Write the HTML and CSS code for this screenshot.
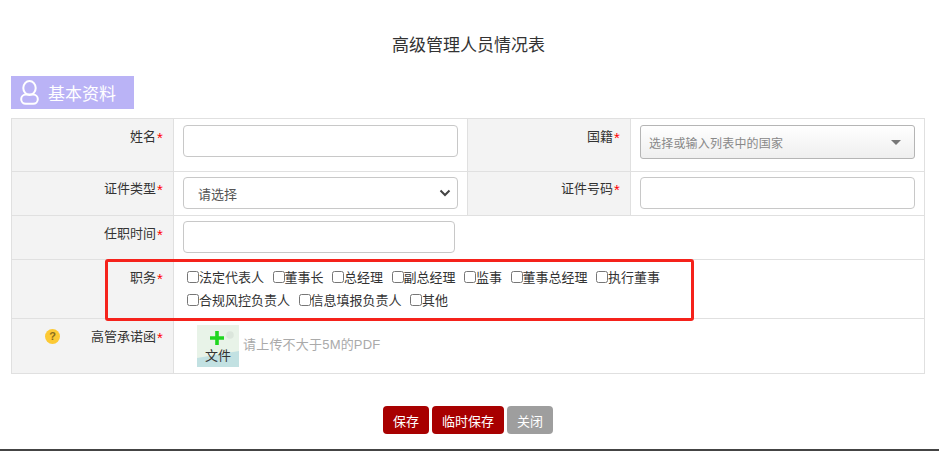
FILE: index.html
```html
<!DOCTYPE html>
<html>
<head>
    <title>高级管理人员情况表</title>
    <link rel="stylesheet" href="styles.css">
</head>
<body>
    <h1 class="page-title">高级管理人员情况表</h1>
    <div class="section-head">
        <svg class="section-icon" width="19" height="25" viewBox="0 0 19 25" fill="none" stroke="#fff" stroke-width="2">
            <ellipse cx="9.5" cy="8" rx="6.2" ry="7"/>
            <rect x="1.2" y="14.5" width="16.6" height="9.3" rx="4.6"/>
        </svg>
        <span>基本资料</span>
    </div>
    <div class="form-wrap">
        <table class="info-table">
            <colgroup>
                <col class="col-label">
                <col class="col-value">
                <col class="col-label2">
                <col>
            </colgroup>
            <tr class="row-1">
                <th>姓名<em>*</em></th>
                <td><input type="text" class="field"></td>
                <th>国籍<em>*</em></th>
                <td>
                    <div class="combo">
                        <span>选择或输入列表中的国家</span>
                        <i class="combo-caret"></i>
                    </div>
                </td>
            </tr>
            <tr class="row-2">
                <th>证件类型<em>*</em></th>
                <td>
                    <div class="field select-field">
                        <span>请选择</span>
                        <svg width="12" height="8" viewBox="0 0 12 8" fill="none" stroke="#444" stroke-width="2">
                            <path d="M1.5 1.5 6 6l4.5-4.5"/>
                        </svg>
                    </div>
                </td>
                <th>证件号码<em>*</em></th>
                <td><input type="text" class="field"></td>
            </tr>
            <tr class="row-3">
                <th>任职时间<em>*</em></th>
                <td colspan="3"><input type="text" class="field field-short"></td>
            </tr>
            <tr class="row-4">
                <th>职务<em>*</em></th>
                <td colspan="3">
                    <div class="check-list">
                        <label><input type="checkbox">法定代表人</label>
                        <label><input type="checkbox">董事长</label>
                        <label><input type="checkbox">总经理</label>
                        <label><input type="checkbox">副总经理</label>
                        <label><input type="checkbox">监事</label>
                        <label><input type="checkbox">董事总经理</label>
                        <label><input type="checkbox">执行董事</label>
                        <label><input type="checkbox">合规风控负责人</label>
                        <label><input type="checkbox">信息填报负责人</label>
                        <label><input type="checkbox">其他</label>
                    </div>
                </td>
            </tr>
            <tr class="row-5">
                <th class="help-cell"><i class="help-icon">?</i>高管承诺函<em>*</em></th>
                <td colspan="3">
                    <div class="upload">
                        <div class="upload-btn">
                            <svg class="upload-bg" width="42" height="42" viewBox="0 0 42 42">
                                <rect width="42" height="42" fill="#e8f3e8"/>
                                <path d="M0 33 42 26V42H0Z" fill="#c2e1e2"/>
                                <circle cx="33" cy="10" r="3.8" fill="#dbe6dc"/>
                                <path d="M18.200 6h3.600v5.200H27v3.600h-5.200V20h-3.600v-5.200H13v-3.600h5.200Z" fill="#1fd61f"/>
                            </svg>
                            <span>文件</span>
                        </div>
                        <span class="upload-tip">请上传不大于5M的PDF</span>
                    </div>
                </td>
            </tr>
        </table>
        <div class="highlight-box"></div>
    </div>
    <div class="actions">
        <button class="btn btn-red">保存</button>
        <button class="btn btn-red">临时保存</button>
        <button class="btn btn-grey">关闭</button>
    </div>
    <div class="bottom-line"></div>
</body>
</html>
```

FILE: styles.css
```css
html, body {
    height: 451px;
    overflow: hidden;
}
body {
    margin: 0;
    background-color: #fff;
    color: #333;
    font-family: "Liberation Sans", "Noto Sans CJK SC", sans-serif;
    font-size: 13px;
    display: flex;
    flex-direction: column;
}
.page-title {
    margin: 35px 0 0;
    height: 41px;
    line-height: 21px;
    font-size: 17px;
    font-weight: normal;
    text-align: center;
    padding-right: 2px;
}
.section-head {
    margin-left: 11px;
    width: 123px;
    height: 33px;
    background-color: #bab3f6;
    color: #fff;
    font-size: 17px;
    display: flex;
    align-items: center;
    box-sizing: border-box;
    padding-left: 9px;
    gap: 9px;
}
.form-wrap {
    position: relative;
    margin: 9px 14px 0 11px;
}
.info-table {
    width: 100%;
    border-collapse: collapse;
    table-layout: fixed;
}
.info-table th,
.info-table td {
    border: 1px solid #e0e0e0;
    padding: 0;
}
.info-table th {
    background-color: #f3f3f3;
    font-weight: normal;
    text-align: right;
    vertical-align: top;
    padding: 9px 9px 0 0;
    line-height: 18px;
}
.info-table td {
    vertical-align: top;
    padding: 6px 9px 0;
}
.info-table em {
    display: inline-block;
    width: 8px;
    color: #f00;
    font-size: 15px;
    line-height: 14px;
    font-style: normal;
    text-align: center;
    vertical-align: -2px;
}
.col-label {
    width: 162px;
}
.col-value {
    width: 294px;
}
.col-label2 {
    width: 163px;
}
.row-1 { height: 53px; }
.row-2 { height: 44px; }
.row-3 { height: 44px; }
.row-4 { height: 59px; }
.row-5 { height: 55px; }
.info-table .row-2 th {
    padding-top: 8px;
}
.info-table .row-2 td,
.info-table .row-3 td {
    padding-top: 5px;
}
.field {
    display: block;
    width: 100%;
    height: 32px;
    box-sizing: border-box;
    border: 1px solid #c8c8c8;
    border-radius: 4px;
    background-color: #fff;
}
.field-short {
    width: 272px;
}
.select-field {
    display: flex;
    align-items: center;
    justify-content: space-between;
    padding: 0 6px 0 14px;
    color: #555;
}
.combo {
    height: 34px;
    box-sizing: border-box;
    border: 1px solid #b5b5b5;
    border-radius: 3px;
    background: linear-gradient(#fff, #efefef);
    display: flex;
    align-items: center;
    justify-content: space-between;
    padding: 0 13px 0 8px;
    color: #888;
    font-size: 12px;
    letter-spacing: 0.2px;
}
.combo-caret {
    width: 0;
    height: 0;
    border-left: 5px solid transparent;
    border-right: 5px solid transparent;
    border-top: 5px solid #777;
}
.check-list {
    display: flex;
    flex-wrap: wrap;
    column-gap: 8.5px;
    row-gap: 5px;
    width: 500px;
    padding: 3px 0 0 4px;
    line-height: 18px;
    color: #333;
}
.check-list label {
    display: flex;
    align-items: flex-start;
}
.check-list input {
    width: 12px;
    height: 12px;
    margin: 2px 0 0;
    flex: none;
}
.help-cell {
    position: relative;
}
.help-icon {
    position: absolute;
    left: 33px;
    top: 10px;
    width: 15px;
    height: 15px;
    border-radius: 50%;
    background-color: #fcc934;
    color: #8a6d1d;
    font-size: 11px;
    font-weight: bold;
    font-style: normal;
    line-height: 15px;
    text-align: center;
}
.upload {
    display: flex;
    align-items: center;
    padding-left: 14px;
}
.upload-btn {
    position: relative;
    width: 42px;
    height: 42px;
    flex: none;
}
.upload-bg {
    position: absolute;
    left: 0;
    top: 0;
}
.upload-btn span {
    position: absolute;
    left: 8px;
    bottom: 3px;
    line-height: 16px;
}
.upload-tip {
    margin-left: 4px;
    color: #aaa;
    font-size: 13px;
    letter-spacing: 0.2px;
    padding-bottom: 6px;
}
.highlight-box {
    position: absolute;
    left: 94px;
    top: 141px;
    width: 589px;
    height: 62px;
    box-sizing: border-box;
    border: 3px solid #f5221b;
    border-radius: 3px;
    pointer-events: none;
}
.actions {
    display: flex;
    justify-content: center;
    gap: 3.5px;
    margin-top: 32px;
    padding-right: 3px;
}
.btn {
    height: 28px;
    padding: 0 9.75px;
    border: none;
    border-radius: 4px;
    color: #fff;
    font-family: inherit;
    font-size: 13px;
}
.btn-red {
    background-color: #a80000;
}
.btn-grey {
    background-color: #9e9e9e;
}
.bottom-line {
    margin-top: auto;
    height: 2px;
    background-color: #444;
}
```
